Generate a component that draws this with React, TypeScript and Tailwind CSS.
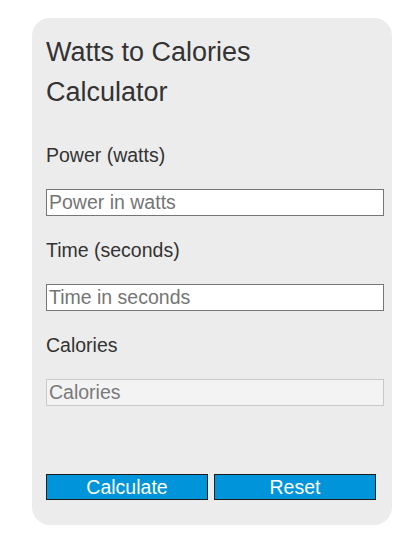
import { useState } from "react";

const font = { fontFamily: '"Liberation Sans", Arial, sans-serif' };

const App = () => {
  const [watts, setWatts] = useState("");
  const [seconds, setSeconds] = useState("");
  const [calories, setCalories] = useState("");

  const calcular = () => {
    const w = parseFloat(watts);
    const s = parseFloat(seconds);
    if (!isNaN(w) && !isNaN(s)) {
      setCalories(((w * s) / 4.184).toFixed(2));
    }
  };

  const limpar = () => {
    setWatts("");
    setSeconds("");
    setCalories("");
  };

  return (
    <div className="min-h-screen bg-white pt-[18px] pl-[32px]" style={font}>
      <div className="w-[360px] rounded-[18px] bg-[#ececec] px-[14px] pt-[14px] pb-[25px] text-[#333]">
        <h1 className="text-[27px] leading-[40px] font-normal">
          Watts to Calories
          <br />
          Calculator
        </h1>

        <label className="mt-[29px] block text-[19.5px] leading-[28px]">Power (watts)</label>
        <input
          className="mt-[20px] block h-[27px] w-[338px] border border-[#767676] bg-white px-[2px] text-[19.5px] text-[#333] placeholder:text-[#757575] outline-none"
          type="text"
          value={watts}
          onChange={(e) => setWatts(e.target.value)}
          placeholder="Power in watts"
        />

        <label className="mt-[20px] block text-[19.5px] leading-[28px]">Time (seconds)</label>
        <input
          className="mt-[20px] block h-[27px] w-[338px] border border-[#767676] bg-white px-[2px] text-[19.5px] text-[#333] placeholder:text-[#757575] outline-none"
          type="text"
          value={seconds}
          onChange={(e) => setSeconds(e.target.value)}
          placeholder="Time in seconds"
        />

        <label className="mt-[20px] block text-[19.5px] leading-[28px]">Calories</label>
        <input
          className="mt-[20px] block h-[27px] w-[338px] border border-[#c9c9c9] bg-[#f3f3f3] px-[2px] text-[19.5px] text-[#333] placeholder:text-[#7a7a7a] outline-none"
          type="text"
          value={calories}
          readOnly
          placeholder="Calories"
        />

        <div className="mt-[68px] flex gap-[6px]">
          <button
            type="button"
            onClick={calcular}
            className="h-[26px] w-[162px] border border-[#1b1b1b] bg-[#0095da] text-[19.5px] leading-[24px] text-white"
          >
            Calculate
          </button>
          <button
            type="button"
            onClick={limpar}
            className="h-[26px] w-[162px] border border-[#1b1b1b] bg-[#0095da] text-[19.5px] leading-[24px] text-white"
          >
            Reset
          </button>
        </div>
      </div>
    </div>
  );
};

export default App;
